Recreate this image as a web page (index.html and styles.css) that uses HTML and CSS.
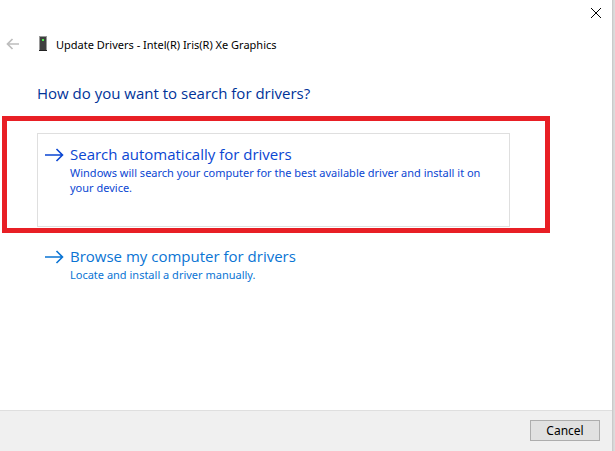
FILE: index.html
```html
<!DOCTYPE html>
<html lang="en">
<head>
  <meta charset="UTF-8">
  <title>Update Drivers</title>
  <link rel="stylesheet" href="styles.css">
</head>
<body>
  <div class="window">
    <div class="titlebar">
      <button type="button" class="close" aria-label="Close">
        <svg width="12" height="12" viewBox="0 0 12 12"><path d="M1 1l10 10M11 1L1 11"/></svg>
      </button>
    </div>

    <header class="header">
      <button type="button" class="back" aria-label="Back" disabled>
        <svg width="14" height="12" viewBox="0 0 14 12"><path d="M13 6H2M6.500 1L1.500 6l5 5"/></svg>
      </button>
      <!-- device icon -->
      <svg class="device" width="10" height="16" viewBox="0 0 10 16">
        <rect x="1" y="0" width="8" height="14" fill="#9a9a9a"/>
        <rect x="2" y="1" width="6" height="13" fill="#3f3f3f"/>
        <rect x="4" y="3" width="2" height="2" fill="#4df04a"/>
        <rect x="1" y="14" width="8" height="1" fill="#222"/>
      </svg>
      <span class="title">Update Drivers - Intel(R) Iris(R) Xe Graphics</span>
    </header>

    <main class="content">
      <h1 class="question">How do you want to search for drivers?</h1>

      <div class="highlighted">
        <button type="button" class="option selected">
          <svg class="arrow" width="20" height="14" viewBox="0 0 20 14"><path d="M0 7h17.500M11.500 1L17.500 7l-6 6"/></svg>
          <span class="option-text">
            <span class="option-title">Search automatically for drivers</span>
            <span class="option-note">Windows will search your computer for the best available driver and install it on your device.</span>
          </span>
        </button>
      </div>

      <button type="button" class="option">
        <svg class="arrow" width="20" height="14" viewBox="0 0 20 14"><path d="M0 7h17.500M11.500 1L17.500 7l-6 6"/></svg>
        <span class="option-text">
          <span class="option-title">Browse my computer for drivers</span>
          <span class="option-note">Locate and install a driver manually.</span>
        </span>
      </button>
    </main>

    <footer class="footer">
      <button type="button" class="cancel">Cancel</button>
    </footer>
  </div>
</body>
</html>
```

FILE: styles.css
```css
* {
  box-sizing: border-box;
}

body {
  margin: 0;
  padding-right: 3px;
  background: linear-gradient(to left, #dcdcdc 1px, #c4c4c4 3px);
  font-family: "Segoe UI", "Noto Sans", sans-serif;
  font-size: 11px;
  color: #000;
}

button {
  margin: 0;
  padding: 0;
  border: none;
  background: none;
  font: inherit;
  color: inherit;
}

svg {
  display: block;
  flex: none;
  fill: none;
  stroke: currentColor;
}

.window {
  display: flex;
  flex-direction: column;
  min-height: 100vh;
  background: #fff;
}

.titlebar {
  display: flex;
  justify-content: flex-end;
  padding: 7px 10px 0 0;
}

.header {
  display: flex;
  align-items: center;
  height: 20px;
  margin-top: 15px;
  padding-left: 6px;
}

.close {
  display: flex;
}

.back {
  display: flex;
  color: #bdbdbd;
}

.back svg {
  stroke-width: 1.7;
}

.device {
  margin: 0 8px 0 18px;
  stroke: none;
}

.content {
  flex: 1;
  padding: 0 102px 24px 37px;
}

.question {
  margin: 27px 0 28px;
  font-family: "Segoe UI", "Open Sans", sans-serif;
  font-size: 15px;
  font-weight: normal;
  line-height: 24px;
  color: #003399;
}

.option {
  display: flex;
  gap: 5px;
  width: 100%;
  padding: 10px 16px 8px 7px;
  border: 1px solid transparent;
  text-align: left;
  color: #0a74d4;
}

.option.selected {
  min-height: 94px;
  border-color: #dfdfdf;
  color: #0a46d2;
}

.arrow {
  margin-top: 4px;
  stroke-width: 1.6;
}

.option-title,
.option-note {
  display: block;
}

.option-title {
  font-family: "Segoe UI", "Open Sans", sans-serif;
  font-size: 15px;
  line-height: 21px;
}

.option-note {
  line-height: 15px;
}

/* red marker box around the recommended choice */
.highlighted {
  position: relative;
  margin-bottom: 8px;
}

.highlighted::after {
  content: "";
  position: absolute;
  inset: -17px -40px -6px -35px;
  border: 5px solid #e81f25;
  pointer-events: none;
}

.footer {
  display: flex;
  justify-content: flex-end;
  padding: 9px 12px 10px;
  border-top: 1px solid #dfdfdf;
  background: #f0f0f0;
}

.cancel {
  width: 70px;
  height: 21px;
  border: 1px solid #adadad;
  background: #e1e1e1;
  font-size: 12px;
}
```
